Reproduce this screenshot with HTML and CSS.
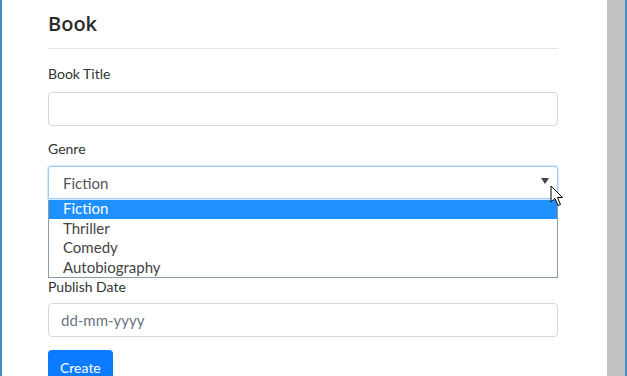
FILE: index.html
```html
<!DOCTYPE html>
<html lang="en">

<head>
    <meta charset="UTF-8">
    <meta name="viewport" content="width=device-width, initial-scale=1.0">
    <title>Book</title>

    <link rel="stylesheet" href="styles.css">
</head>

<body>
    <div class="window">
        <div class="page">
            <form class="bookForm">
                <h4 class="title">Book</h4>
                <hr>
                <div class="group">
                    <label>Book Title</label>
                    <div class="field"></div>
                </div>
                <div class="group genre">
                    <label>Genre</label>
                    <div class="field select">
                        <span>Fiction</span>
                        <span class="arrow"></span>
                        <!-- mouse pointer -->
                        <svg class="cursor" width="16" height="24" viewBox="0 0 16 24">
                            <path d="M1 1 L1 17 L5 13.5 L8 20.5 L10.5 19.5 L7.5 12.5 L12.5 12.5 Z" fill="#fff" stroke="#000" stroke-width="1" stroke-linejoin="round" />
                        </svg>
                    </div>
                    <ul class="options">
                        <li class="selected">Fiction</li>
                        <li>Thriller</li>
                        <li>Comedy</li>
                        <li>Autobiography</li>
                    </ul>
                </div>
                <div class="group publish">
                    <label>Publish Date</label>
                    <div class="field date">dd-mm-yyyy</div>
                </div>
                <div class="btn">Create</div>
            </form>
        </div>
        <div class="scrollbar"></div>
    </div>
</body>

</html>
```

FILE: styles.css
```css
* {
    box-sizing: border-box;
}

body {
    margin: 0;
    overflow: hidden;
    font-family: "Lato", "Open Sans", sans-serif;
    color: #212529;
    background-color: #fff;
}

.window {
    height: 376px;
    display: flex;
    border-left: 2px solid #3f8fcf;
    border-right: 2px solid #3f8fcf;
}

.page {
    flex: 1;
    padding: 10px 0 0 46px;
}

.scrollbar {
    width: 18px;
    background-color: #c2c2c2;
}

.bookForm {
    width: 510px;
}

.title {
    margin: 0;
    font-family: "Open Sans", sans-serif;
    font-size: 20px;
    font-weight: 600;
    line-height: 28px;
    color: #2a2a2a;
}

hr {
    margin: 10px 0 14px;
    border: 0;
    border-top: 1px solid #e5e5e5;
}

.group {
    margin-bottom: 12px;
}

label {
    display: block;
    font-size: 14px;
    line-height: 22px;
    color: #333;
    margin-bottom: 7px;
}

.field {
    height: 34px;
    border: 1px solid #d6d9dc;
    border-radius: 4px;
    font-size: 15px;
    color: #555;
}

.genre {
    margin-bottom: 0;
}

.genre label {
    margin-bottom: 6px;
}

.select {
    position: relative;
    height: 33px;
    display: flex;
    align-items: center;
    justify-content: space-between;
    padding: 0 8px 0 14px;
    border-color: #9ccbf5;
    box-shadow: 0 0 0 1px #d5e9fb;
    border-radius: 3px 3px 0 0;
}

.arrow {
    width: 0;
    height: 0;
    border-left: 4px solid transparent;
    border-right: 4px solid transparent;
    border-top: 6px solid #444;
    margin-top: -4px;
}

.cursor {
    position: absolute;
    right: -9px;
    top: 18px;
}

.options {
    list-style: none;
    margin: 0;
    padding: 0;
    border: 1px solid #8d9cad;
    border-top: 0;
    font-size: 15px;
    color: #444;
}

.options li {
    height: 19.5px;
    line-height: 19.5px;
    padding-left: 14px;
}

.options li.selected {
    background-color: #1e90ff;
    color: #fff;
}

.publish label {
    line-height: 18px;
    margin-bottom: 7px;
}

.publish {
    margin-bottom: 13px;
}

.date {
    display: flex;
    align-items: center;
    padding-left: 12px;
    color: #6c757d;
}

.btn {
    display: inline-block;
    padding: 0 12px;
    height: 38px;
    line-height: 36px;
    font-size: 14px;
    color: #fff;
    background-color: #0b7cff;
    border-radius: 4px;
}
```
